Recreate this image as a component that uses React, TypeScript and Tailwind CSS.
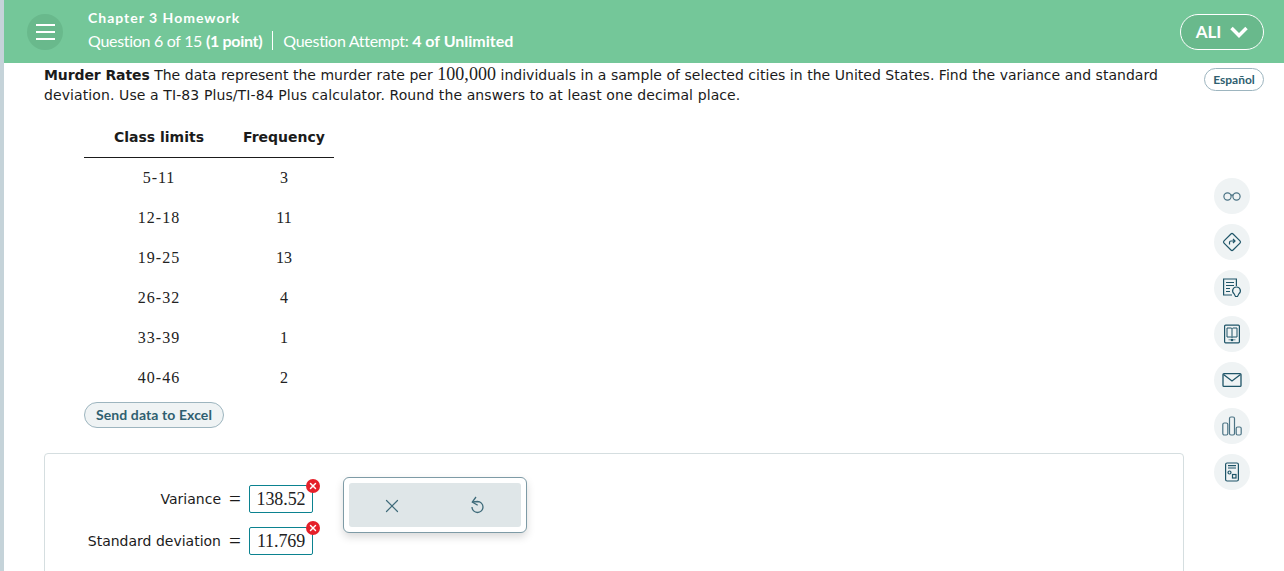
import { X } from "lucide-react";

const rows = [
  ["5-11", "3"],
  ["12-18", "11"],
  ["19-25", "13"],
  ["26-32", "4"],
  ["33-39", "1"],
  ["40-46", "2"],
];

const verdana = "font-['DejaVu_Sans',sans-serif]";
const serif = "font-['Liberation_Serif',serif]";
const lato = "font-['Lato',sans-serif]";

function ToolButton({ children }: { children: React.ReactNode }) {
  return (
    <div className="w-9 h-9 rounded-full bg-[#eff3f4] flex items-center justify-center">
      {children}
    </div>
  );
}

function AnswerRow({ label, value }: { label: string; value: string }) {
  return (
    <div className="flex items-center h-7">
      <span className={`${verdana} w-[134px] text-right text-[14px] text-[#1b1b1b]`}>{label}</span>
      <span className={`${serif} w-7 text-center text-[21px] leading-none text-[#1b1b1b]`}>=</span>
      <div className="relative">
        <div className={`${serif} w-16 h-7 rounded-[2px] border border-[#0b8290] bg-white flex items-center justify-center text-[18px] tracking-[-0.1px] text-[#222]`}>
          {value}
        </div>
        <div className="absolute -top-[6px] -right-[7px] w-[14px] h-[14px] rounded-full bg-[#e5202a] flex items-center justify-center">
          <X size={10} strokeWidth={3.5} color="#fff" />
        </div>
      </div>
    </div>
  );
}

export default function App() {
  return (
    <div className="w-[1284px] h-[571px] overflow-hidden flex bg-white">
      <div className="w-1 shrink-0 bg-[#c5d3d9]" />
      <div className="flex-1 flex flex-col min-w-0">
        <header className={`${lato} h-[63px] shrink-0 bg-[#74c799] flex items-center pl-[23px] pr-[20px] text-white`}>
          <div className="w-9 h-9 rounded-full bg-[#69b98c] flex flex-col items-center justify-center gap-[5px]">
            <span className="block w-[19px] h-[2px] bg-white" />
            <span className="block w-[19px] h-[2px] bg-white" />
            <span className="block w-[19px] h-[2px] bg-white" />
          </div>
          <div className="ml-[25px] flex flex-col pb-1">
            <div className="text-[14px] font-bold leading-[18px] tracking-[1px]">Chapter 3 Homework</div>
            <div className="flex items-center mt-[4px] text-[16px] leading-[20px] tracking-[-0.3px]">
              <span>
                Question 6 of 15 <b className="font-bold">(1 point)</b>
              </span>
              <span className="block w-px h-[19px] bg-white ml-[10px] mr-[10px]" />
              <span>
                Question Attempt: <b className="font-bold tracking-normal">4 of Unlimited</b>
              </span>
            </div>
          </div>
          <div className="ml-auto w-[84px] h-[36px] rounded-full border border-white bg-[#69b98c] flex items-center justify-center gap-[9px]">
            <span className="text-[17px] font-bold">ALI</span>
            <svg width="18" height="12" viewBox="0 0 18 12" fill="none" stroke="#fff" strokeWidth="3.5">
              <path d="M1.5 2l7.5 7.5 7.5-7.5" />
            </svg>
          </div>
        </header>

        <div className="flex flex-1 min-h-0">
          <main className="w-[1180px] shrink-0 pl-10 pt-[2px]">
            <p className={`${verdana} text-[14px] leading-[20px] text-[#1b1b1b] tracking-[0.03px]`}>
              <b className="font-bold tracking-[-0.1px]">Murder Rates</b> The data represent the murder rate per{" "}
              <span className={`${serif} text-[18px] leading-none`}>100,000</span> individuals in a sample of selected cities in the United States. Find the variance and standard{" "}
              <span className="tracking-[0.1px]">deviation. Use a TI-83 Plus/TI-84 Plus calculator. Round the answers to at least one decimal place.</span>
            </p>

            <div className="ml-10 mt-[12px] w-[250px]">
              <div className={`${verdana} flex h-[41px] items-center border-b border-[#1b1b1b] text-[14px] font-bold text-[#1b1b1b]`}>
                <span className="w-[150px] text-center">Class limits</span>
                <span className="w-[100px] text-center">Frequency</span>
              </div>
              {rows.map(([limits, freq]) => (
                <div key={limits} className={`${serif} flex h-10 items-center text-[16px] text-[#222]`}>
                  <span className="w-[150px] text-center tracking-[1px]">{limits}</span>
                  <span className="w-[100px] text-center">{freq}</span>
                </div>
              ))}
            </div>

            <div className={`${lato} ml-10 mt-1 w-[140px] h-[26px] pb-px rounded-full border border-[#9db5bf] bg-[#eff3f4] flex items-center justify-center text-[14px] font-bold tracking-[0.1px] text-[#2f5f70]`}>
              Send data to Excel
            </div>

            <section className="mt-[25px] h-[200px] w-[1140px] rounded-[4px] border border-[#d5dee0] pl-[42px] pt-[23px] flex items-start">
              <div className="flex flex-col gap-[14px] mt-2">
                <AnswerRow label="Variance" value="138.52" />
                <AnswerRow label="Standard deviation" value="11.769" />
              </div>
              <div className="ml-[30px] w-[184px] h-[56px] rounded-[6px] border border-[#7e9ba6] bg-white p-[5px] shadow-[0_4px_8px_rgba(0,0,0,0.15)]">
                <div className="h-full rounded-[3px] bg-[#dfe6e8] flex items-center text-[#3f6b7a]">
                  <div className="w-[85px] flex justify-center pt-[1px]">
                    <X size={22} strokeWidth={1.3} />
                  </div>
                  <div className="w-[87px] flex justify-center pt-[1px]">
                    <svg width="20" height="20" viewBox="0 0 20 20" fill="none" stroke="currentColor" strokeWidth="1.3">
                      <path d="M4.3 6L9.5 5.5a5.5 5.5 0 1 1-5.5 5.5" />
                      <path d="M8 1L4.3 6l5.4 3.3" />
                    </svg>
                  </div>
                </div>
              </div>
            </section>
          </main>

          <aside className="flex-1 flex flex-col items-center">
            <div className={`${lato} mt-[5px] w-[60px] h-[23px] rounded-full border border-[#9db5bf] flex items-center justify-center text-[12px] font-bold text-[#2f5f70]`}>
              Español
            </div>
            <div className="mt-[87px] mr-1 flex flex-col gap-[10px]">
              <ToolButton>
                <svg width="22" height="12" viewBox="0 0 22 12" fill="none" stroke="#4c7485" strokeWidth="1.2">
                  <circle cx="6.5" cy="6.5" r="3.6" />
                  <circle cx="15.5" cy="6.5" r="3.6" />
                  <path d="M10 5.5c.6-.6 1.4-.6 2 0" />
                </svg>
              </ToolButton>
              <ToolButton>
                <svg width="20" height="20" viewBox="0 0 20 20" fill="none" stroke="#1f5568" strokeWidth="1.2">
                  <rect x="3.6" y="3.6" width="12.8" height="12.8" rx="1.5" transform="rotate(45 10 10)" />
                  <path d="M7.5 12.5v-2c0-1 .6-1.5 1.5-1.5h3.5M11 7l2 2-2 2" />
                </svg>
              </ToolButton>
              <ToolButton>
                <svg width="20" height="22" viewBox="0 0 20 22" fill="none" stroke="#1f5568" strokeWidth="1.2">
                  <path d="M10 18H1.6V2h12.8v7" />
                  <path d="M4 5.5h8M4 8.5h8M4 11.5h4M4 14.5h4" />
                  <path d="M14.5 10a3.8 3.8 0 0 0-2.4 6.8l1.4 2.7h2l1.4-2.7a3.8 3.8 0 0 0-2.4-6.8z" />
                </svg>
              </ToolButton>
              <ToolButton>
                <svg width="20" height="20" viewBox="0 0 20 20" fill="none" stroke="#1f5568" strokeWidth="1.2">
                  <rect x="2.6" y="1.2" width="14.8" height="17.6" rx="1" />
                  <path d="M5 4h4.2l.8.8.8-.8H15v9H10.8l-.8.6-.8-.6H5zM10 4.8v8.6" strokeWidth="1" />
                  <path d="M6.5 15.8h7" strokeWidth=".6" />
                  <circle cx="10" cy="16" r=".7" fill="#1f5568" />
                </svg>
              </ToolButton>
              <ToolButton>
                <svg width="20" height="16" viewBox="0 0 20 16" fill="none" stroke="#1f5568" strokeWidth="1.3">
                  <rect x="1" y="1.6" width="18" height="12.8" rx="1" />
                  <path d="M1.5 2.5L10 9l8.5-6.5" />
                </svg>
              </ToolButton>
              <ToolButton>
                <svg width="20" height="20" viewBox="0 0 20 20" fill="none" stroke="#4c7485" strokeWidth="1.2">
                  <rect x="0.8" y="7" width="5" height="12" rx="1.5" />
                  <rect x="7.5" y="1" width="5" height="18" rx="1.5" />
                  <rect x="14.2" y="11" width="5" height="8" rx="1.5" />
                </svg>
              </ToolButton>
              <ToolButton>
                <svg width="18" height="20" viewBox="0 0 18 20" fill="none" stroke="#1f5568" strokeWidth="1.2">
                  <rect x="2.6" y="1" width="12.8" height="18" rx="1.5" />
                  <path d="M5 3.6h8M5 6h8" />
                  <circle cx="6.5" cy="10.5" r="1.5" />
                  <rect x="9.5" y="12.5" width="3.5" height="3.5" />
                </svg>
              </ToolButton>
            </div>
          </aside>
        </div>
      </div>
    </div>
  );
}
